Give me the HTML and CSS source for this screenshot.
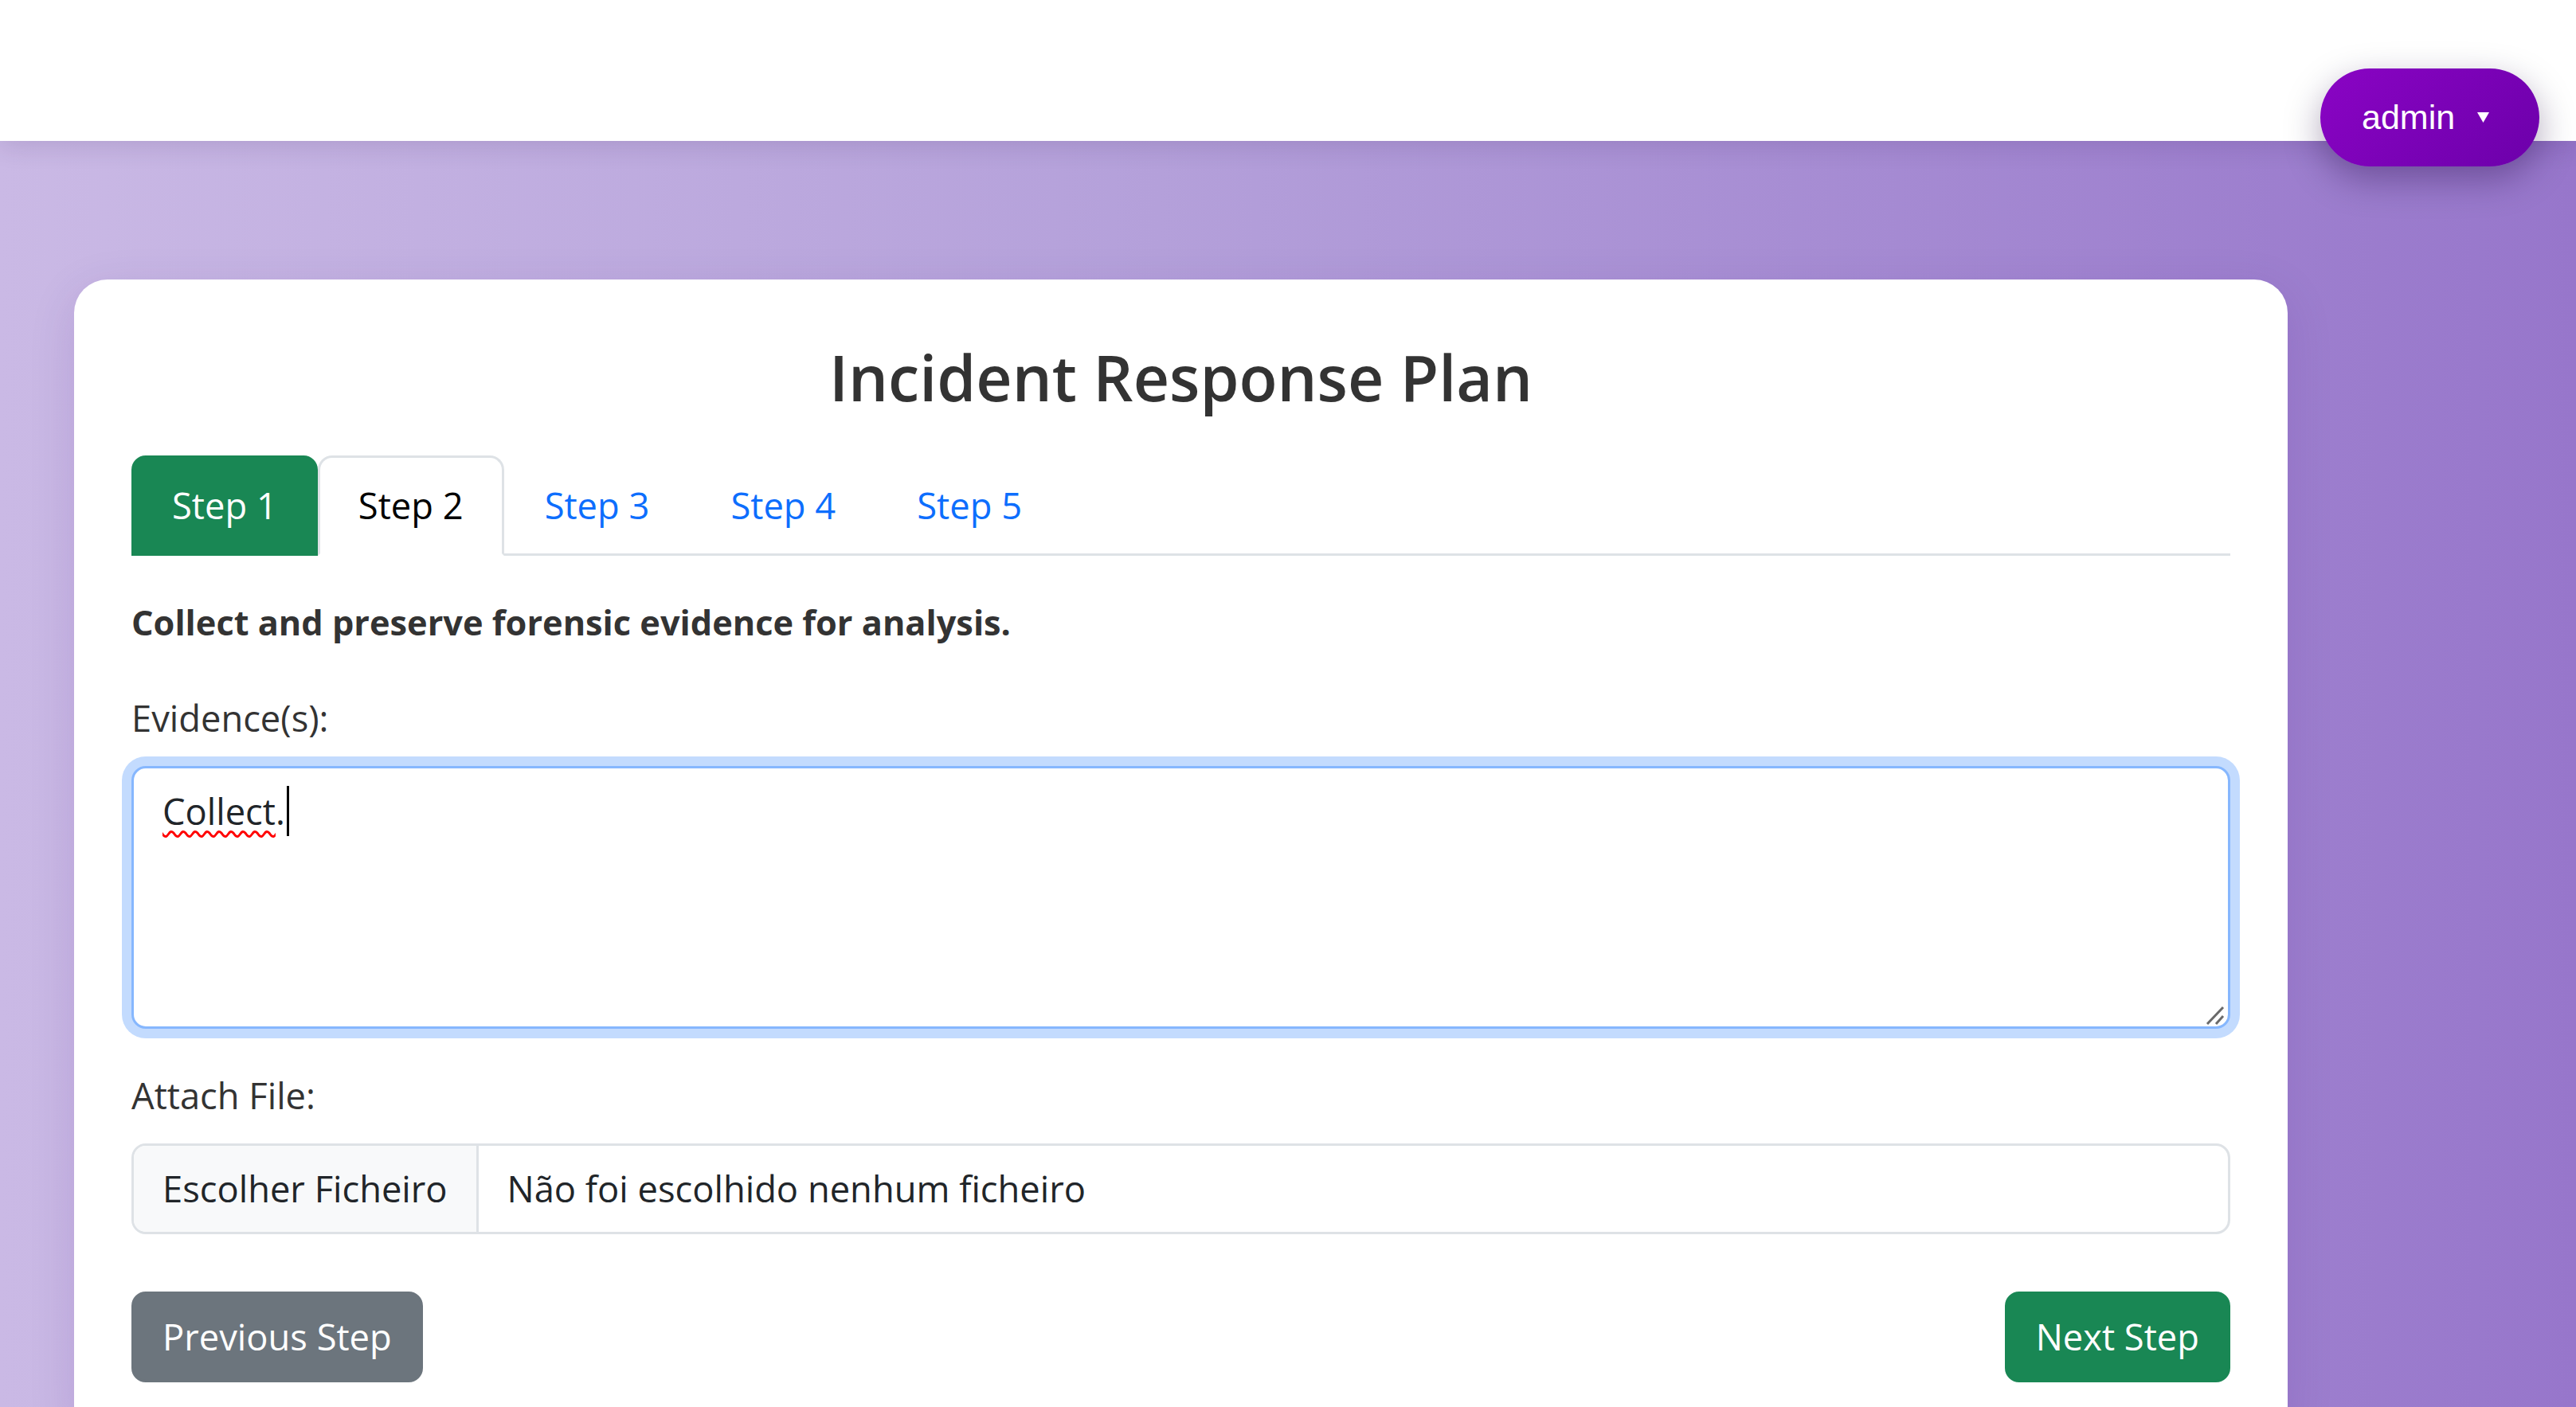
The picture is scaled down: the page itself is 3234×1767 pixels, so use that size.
FILE: index.html
```html
<!DOCTYPE html>
<html lang="en">
<head>
<meta charset="utf-8">
<title>Incident Response Plan</title>
<link rel="stylesheet" href="styles.css">
</head>
<body>
<header class="topbar">
  <button class="user-menu" type="button">
    <span class="user-name">admin</span>
    <svg class="user-caret" viewBox="0 0 15 13" width="15" height="13" aria-hidden="true"><polygon points="0,0 15,0 7.5,13" fill="#ffffff"/></svg>
  </button>
</header>
<main class="page">
  <section class="card">
    <h1 class="title">Incident Response Plan</h1>
    <nav class="tabs">
      <a class="tab tab-done" href="#">Step 1</a>
      <a class="tab tab-active" href="#">Step 2</a>
      <a class="tab" href="#">Step 3</a>
      <a class="tab" href="#">Step 4</a>
      <a class="tab" href="#">Step 5</a>
    </nav>
    <div class="step">
      <p class="step-desc">Collect and preserve forensic evidence for analysis.</p>
      <div class="field">
        <label class="field-label">Evidence(s):</label>
        <div class="textbox" role="textbox" aria-multiline="true"><span class="misspelled">Collect</span>.<span class="text-caret"></span><svg class="grip" viewBox="0 0 24 24" width="24" height="24" aria-hidden="true"><line x1="2" y1="23" x2="22" y2="2" stroke="#6a6a6a" stroke-width="3"/><line x1="13" y1="23" x2="22" y2="13" stroke="#6a6a6a" stroke-width="3"/></svg></div>
      </div>
      <div class="field field-last">
        <label class="field-label">Attach File:</label>
        <div class="file-input"><span class="file-btn">Escolher Ficheiro</span><span class="file-name">Não foi escolhido nenhum ficheiro</span></div>
      </div>
      <div class="actions">
        <button class="btn btn-prev" type="button">Previous Step</button>
        <button class="btn btn-next" type="button">Next Step</button>
      </div>
    </div>
  </section>
</main>
</body>
</html>
```

FILE: styles.css
```css
html {
  overflow: hidden;
}

html, body {
  margin: 0;
  padding: 0;
}

body {
  min-height: 100vh;
  font-family: "Open Sans", "Noto Sans", sans-serif;
  font-size: 45.3px;
  color: #212529;
  background: linear-gradient(90deg, #cab9e5 0%, #b4a0da 45%, #9776cb 100%);
}

.topbar {
  position: relative;
  z-index: 2;
  height: 177px;
  background: #ffffff;
  box-shadow: 0 6px 30px rgba(40, 20, 80, 0.14);
}

.user-menu {
  position: absolute;
  top: 86px;
  right: 46px;
  box-sizing: border-box;
  width: 275px;
  height: 123px;
  padding: 0 62px 0 52px;
  display: flex;
  align-items: center;
  gap: 28px;
  border: 0;
  border-radius: 62px;
  background: linear-gradient(135deg, #8a04c4 0%, #6c00aa 100%);
  color: #ffffff;
  font-family: "Liberation Sans", Arial, sans-serif;
  font-size: 43px;
  box-shadow: 0 16px 45px rgba(30, 0, 60, 0.35);
}

.user-name {
  line-height: 1;
}

.user-caret {
  display: block;
}

.page {
  padding: 174px 0 0 93px;
}

.card {
  box-sizing: border-box;
  width: 2779px;
  padding: 72px;
  background: #ffffff;
  border-radius: 42px;
  box-shadow: 0 15px 60px rgba(60, 20, 120, 0.12);
}

.title {
  margin: 0 0 48px;
  text-align: center;
  font-size: 78.8px;
  font-weight: 600;
  line-height: 101px;
  color: #333333;
}

.tabs {
  display: flex;
  border-bottom: 3px solid #dee2e6;
}

.tab {
  display: block;
  padding: 24px 48px;
  margin-bottom: -3px;
  line-height: 72px;
  border: 3px solid transparent;
  border-radius: 18px 18px 0 0;
  color: #0d6efd;
  text-decoration: none;
}

.tab-done {
  background: #198754;
  border-color: #198754;
  color: #ffffff;
}

.tab-active {
  background: #ffffff;
  border-color: #dee2e6 #dee2e6 #ffffff;
  color: #000000;
}

.step {
  margin-top: 48px;
}

.step-desc {
  margin: 0 0 48px;
  font-size: 43.3px;
  font-weight: 700;
  line-height: 72px;
  color: #333333;
}

.field {
  margin-bottom: 48px;
}

.field-last {
  margin-bottom: 0;
}

.field-label {
  display: block;
  margin-bottom: 24px;
  line-height: 72px;
  color: #333333;
}

.textbox {
  position: relative;
  box-sizing: border-box;
  height: 330px;
  padding: 18px 36px;
  line-height: 72px;
  color: #212529;
  background: #ffffff;
  border: 3px solid #86b7fe;
  border-radius: 18px;
  box-shadow: 0 0 0 12px #c3dbfe;
}

.misspelled {
  text-decoration: underline wavy #ff0000;
  text-decoration-thickness: 3px;
  text-underline-offset: 7px;
}

.text-caret {
  display: inline-block;
  width: 3px;
  height: 63px;
  margin-left: 2px;
  vertical-align: -14px;
  background: #000000;
}

.grip {
  position: absolute;
  right: 4px;
  bottom: 2px;
}

.file-input {
  display: flex;
  border: 3px solid #dee2e6;
  border-radius: 18px;
  overflow: hidden;
  line-height: 72px;
  color: #212529;
}

.file-btn {
  padding: 18px 36px;
  background: #f8f9fa;
  border-right: 3px solid #dee2e6;
}

.file-name {
  padding: 18px 36px;
}

.actions {
  display: flex;
  justify-content: space-between;
  margin-top: 72px;
}

.btn {
  padding: 18px 36px;
  border: 3px solid transparent;
  border-radius: 18px;
  font-family: inherit;
  font-size: inherit;
  line-height: 72px;
  color: #ffffff;
}

.btn-prev {
  background: #6c757d;
  border-color: #6c757d;
}

.btn-next {
  background: #198754;
  border-color: #198754;
}
```
